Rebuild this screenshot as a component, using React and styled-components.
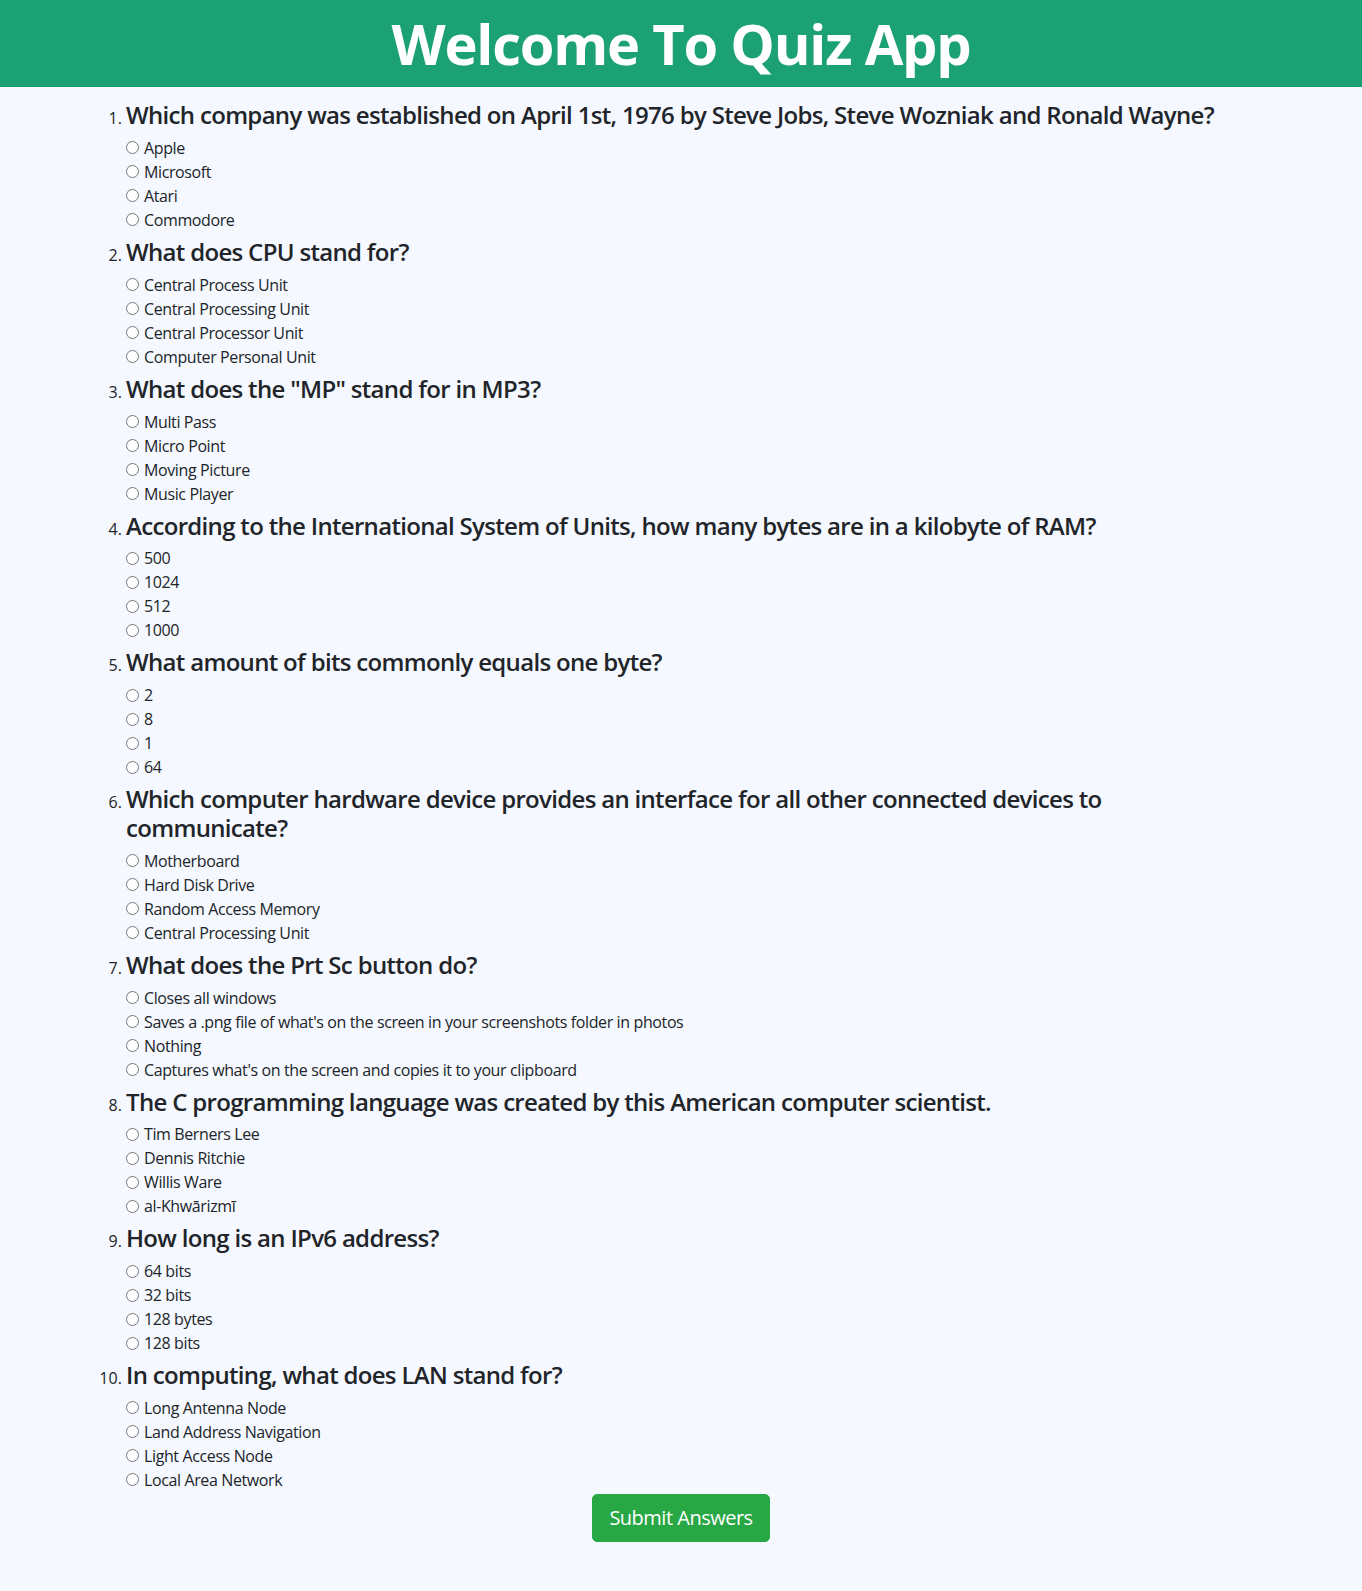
import React from "react";
import styled, { createGlobalStyle } from "styled-components";

const GlobalStyle = createGlobalStyle`
  * { box-sizing: border-box; }
  body {
    margin: 0;
    background: #f5f8ff;
    color: #212529;
    font-family: "Open Sans", "Noto Sans", sans-serif;
    font-size: 16px;
    line-height: 1.5;
  }
`;

const Header = styled.header`
  background: #1ba174;
  padding: 10px 0;
  text-align: center;
`;

const Title = styled.h1`
  margin: 0;
  color: #fff;
  font-size: 56px;
  font-weight: 700;
  line-height: 1.2;
  letter-spacing: -1.2px;
`;

const Container = styled.main`
  max-width: 1140px;
  margin: 0 auto;
  padding: 14px 15px 50px;
`;

const QuestionList = styled.ol`
  margin: 0;
  padding: 0;
`;

const QuestionItem = styled.li`
  margin-bottom: 6px;
  &:last-child { margin-bottom: 0; }
  &::marker { font-size: 16px; }
`;

const QuestionText = styled.h4`
  margin: 0 0 6px;
  font-size: 24px;
  font-weight: 600;
  line-height: 1.2;
  letter-spacing: -0.68px;
`;

const Option = styled.label`
  display: flex;
  align-items: center;
  height: 24px;
  font-size: 16px;
  letter-spacing: -0.38px;
`;

const Radio = styled.input`
  width: 13px;
  height: 13px;
  margin: 0 5px 0 0;
`;

const Actions = styled.div`
  display: flex;
  justify-content: center;
  margin-top: 2px;
`;

const SubmitButton = styled.button`
  background: #28a745;
  border: 1px solid #28a745;
  color: #fff;
  border-radius: 5px;
  padding: 8px 16px;
  font-family: inherit;
  font-size: 20px;
  line-height: 1.5;
  letter-spacing: -0.5px;
  cursor: pointer;
`;

const questions = [
  {
    q: "Which company was established on April 1st, 1976 by Steve Jobs, Steve Wozniak and Ronald Wayne?",
    a: ["Apple", "Microsoft", "Atari", "Commodore"],
  },
  {
    q: "What does CPU stand for?",
    a: ["Central Process Unit", "Central Processing Unit", "Central Processor Unit", "Computer Personal Unit"],
  },
  {
    q: 'What does the "MP" stand for in MP3?',
    a: ["Multi Pass", "Micro Point", "Moving Picture", "Music Player"],
  },
  {
    q: "According to the International System of Units, how many bytes are in a kilobyte of RAM?",
    a: ["500", "1024", "512", "1000"],
  },
  {
    q: "What amount of bits commonly equals one byte?",
    a: ["2", "8", "1", "64"],
  },
  {
    q: "Which computer hardware device provides an interface for all other connected devices to communicate?",
    a: ["Motherboard", "Hard Disk Drive", "Random Access Memory", "Central Processing Unit"],
  },
  {
    q: "What does the Prt Sc button do?",
    a: [
      "Closes all windows",
      "Saves a .png file of what's on the screen in your screenshots folder in photos",
      "Nothing",
      "Captures what's on the screen and copies it to your clipboard",
    ],
  },
  {
    q: "The C programming language was created by this American computer scientist.",
    a: ["Tim Berners Lee", "Dennis Ritchie", "Willis Ware", "al-Khwārizmī"],
  },
  {
    q: "How long is an IPv6 address?",
    a: ["64 bits", "32 bits", "128 bytes", "128 bits"],
  },
  {
    q: "In computing, what does LAN stand for?",
    a: ["Long Antenna Node", "Land Address Navigation", "Light Access Node", "Local Area Network"],
  },
];

export default function App() {
  return (
    <>
      <GlobalStyle />
      <Header>
        <Title>Welcome To Quiz App</Title>
      </Header>
      <Container>
        <QuestionList>
          {questions.map((item, i) => (
            <QuestionItem key={i}>
              <QuestionText>{item.q}</QuestionText>
              {item.a.map((opt) => (
                <Option key={opt}>
                  <Radio type="radio" name={`q${i}`} value={opt} />
                  {opt}
                </Option>
              ))}
            </QuestionItem>
          ))}
        </QuestionList>
        <Actions>
          <SubmitButton type="button">Submit Answers</SubmitButton>
        </Actions>
      </Container>
    </>
  );
}
